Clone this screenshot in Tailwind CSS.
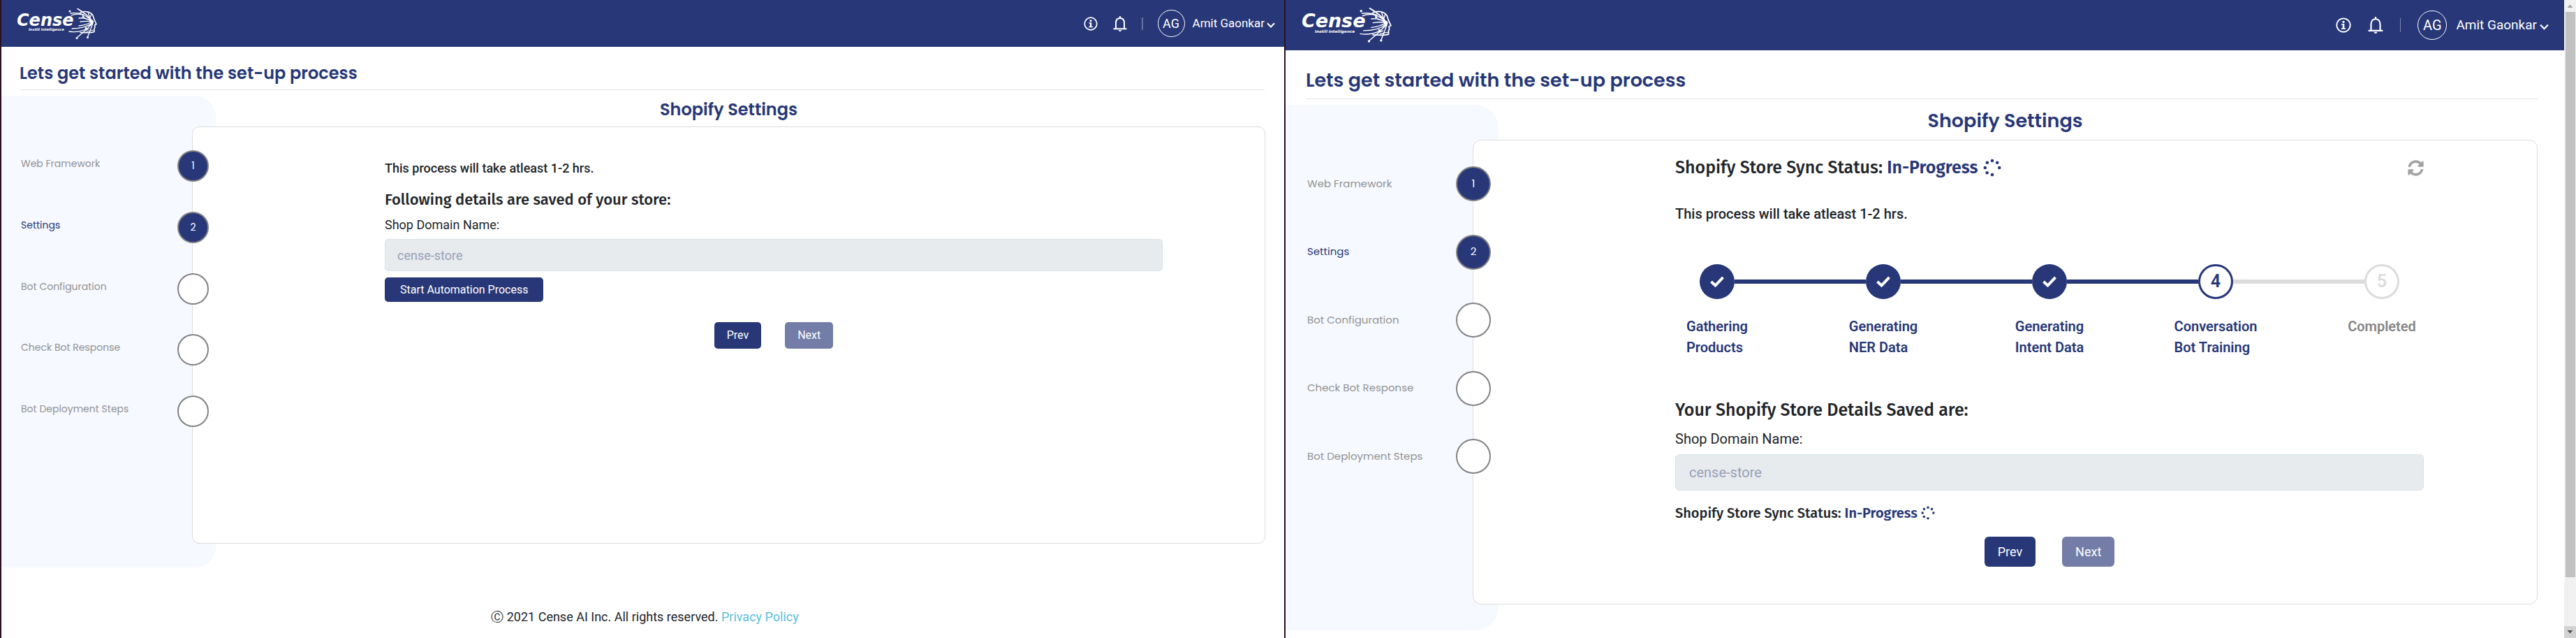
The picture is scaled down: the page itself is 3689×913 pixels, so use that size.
<!DOCTYPE html>
<html lang="en">
<head>
<meta charset="utf-8">
<meta name="viewport" content="width=device-width, initial-scale=1">
<title>Cense – Shopify Settings</title>
<script src="https://cdn.jsdelivr.net/npm/@tailwindcss/browser@4"></script>
</head>
<body class="bg-white font-['Roboto',sans-serif] text-[#212529]">

<svg class="hidden" aria-hidden="true">
  <symbol id="logo" viewBox="0 0 114 46">
    <text x="-1" y="26" font-family="DejaVu Sans, sans-serif" font-style="italic" font-weight="700" font-size="24" fill="#fff">Cense</text>
    <text x="16" y="33" font-family="DejaVu Sans, sans-serif" font-style="italic" font-weight="700" font-size="5" fill="#fff">Instill Intelligence</text>
    <g fill="none" stroke="#fff" stroke-linecap="round" stroke-linejoin="round">
      <path stroke-width="1.6" d="M90 7C97 4 105 6 108 11L110 17L113 23.500L110.500 25L111 28L110 30L110 34.500C104 37 97 35 90 35.500"/>
      <path stroke-width="1.6" d="M86 1.500C94 6 102 12 107 20"/>
      <path stroke-width="1.300" d="M77 11C88 7 99 10 107 20M76 8C84 7 90 8 95 10M88 15C95 14 101 16 107 20M90 20C97 19 102 19 107 20M88 26C96 25 102 23 107 20M78 30C90 30 101 27 108 21M74 34C86 36 101 33 108 21M85 43L99 31L107 22M100.500 42L104 33L108 22M101 6L103 13L107 20M106 9L104 14"/>
      <path stroke-width="1" d="M96 33L103 30M99 34L109 32M93 11L98 16"/>
    </g>
    <g fill="#fff"><circle cx="75" cy="5" r="1.500"/><circle cx="85" cy="43.500" r="1.500"/><circle cx="100.500" cy="42.500" r="1.500"/><circle cx="94" cy="13" r="1.300"/><circle cx="98" cy="29" r="1.200"/><circle cx="106.500" cy="20" r="2.500"/></g>
  </symbol>
  <symbol id="info" viewBox="0 0 20 20">
    <circle cx="10" cy="10" r="8.800" fill="none" stroke="#fff" stroke-width="1.700"/>
    <circle cx="10" cy="5.800" r="1.500" fill="#fff"/>
    <path fill="#fff" d="M7.500 8.200h3.700v5.500h1.500v1.500H7.300v-1.500h1.600V9.700H7.500z"/>
  </symbol>
  <symbol id="bell" viewBox="0 0 20 22">
    <path fill="none" stroke="#fff" stroke-width="2" stroke-linejoin="round" d="M4 18V10C4 5.500 6.500 3 10 3S16 5.500 16 10V18"/>
    <path fill="#fff" d="M9 0h2v3H9zM.500 17.200h19v2H.500zM7.800 20h4.400a2.200 2 0 0 1-4.400 0z"/>
  </symbol>
  <symbol id="chevron" viewBox="0 0 12 8">
    <path fill="none" stroke="#fff" stroke-width="2" d="M1 1.200L6 6.500L11 1.200"/>
  </symbol>
  <symbol id="spinner" viewBox="0 0 26 26">
    <g fill="#273777"><circle cx="13" cy="3" r="2.300"/><circle cx="20.200" cy="5.800" r="2.300"/><circle cx="23.200" cy="13" r="2.300"/><circle cx="13" cy="23" r="2.300"/><circle cx="5.600" cy="20.200" r="2.300"/><circle cx="2.800" cy="13" r="2.300"/><circle cx="5.800" cy="5.800" r="2.300"/></g>
  </symbol>
  <symbol id="refresh" viewBox="0 0 512 512">
    <path fill="#a3a3a3" d="M370.720 133.280C339.458 104.008 298.888 87.962 255.848 88c-77.458.068-144.328 53.178-162.791 126.850-1.344 5.363-6.122 9.150-11.651 9.150H24.103c-7.498 0-13.194-6.807-11.807-14.176C33.933 94.924 134.813 8 256 8c66.448 0 126.791 26.136 171.315 68.685L463.030 40.970C478.149 25.851 504 36.559 504 57.941V192c0 13.255-10.745 24-24 24H345.941c-21.382 0-32.090-25.851-16.971-40.971l41.750-41.749zM32 296h134.059c21.382 0 32.090 25.851 16.971 40.971l-41.750 41.750c31.262 29.273 71.835 45.319 114.876 45.280 77.418-.070 144.315-53.144 162.787-126.849 1.344-5.363 6.122-9.150 11.651-9.150h57.304c7.498 0 13.194 6.807 11.807 14.176C478.067 417.076 377.187 504 256 504c-66.448 0-126.791-26.136-171.315-68.685L48.970 471.030C33.851 486.149 8 475.441 8 454.059V320c0-13.255 10.745-24 24-24z"/>
  </symbol>
  <symbol id="check" viewBox="0 0 20 16">
    <path fill="none" stroke="#fff" stroke-width="4" d="M1.500 8L7.500 13.500L18.500 1.800"/>
  </symbol>
</svg>

<div class="grid min-h-screen grid-cols-[1839fr_1850fr]">

  <!-- Settings before the automation starts -->
  <section class="flex min-w-0 flex-col border-l-2 border-[#2a1024]">
    <header class="flex h-[67px] items-center justify-between bg-[#273777] pl-[23px] pr-[13px] text-white">
      <a href="#" aria-label="Cense home"><svg class="h-[46px] w-[114px]"><use href="#logo"/></svg></a>
      <div class="flex items-center">
        <button aria-label="Information"><svg class="block h-[20px] w-[20px]"><use href="#info"/></svg></button>
        <button aria-label="Notifications" class="ml-[22px]"><svg class="block h-[22px] w-[20px]"><use href="#bell"/></svg></button>
        <span class="ml-[21px] h-[18px] w-[2px] bg-white/30"></span>
        <span class="ml-[21px] flex h-[39px] w-[39px] items-center justify-center rounded-full border border-white text-[18px]">AG</span>
        <button class="ml-[11px] flex items-center gap-[3px] text-[17px]">Amit Gaonkar <svg class="mt-[4px] h-[8px] w-[12px]"><use href="#chevron"/></svg></button>
      </div>
    </header>

    <h1 class="ml-[26px] mr-[28px] border-b border-[#e3e3e6] pb-[3px] pt-[18px] font-['Poppins','Inter',sans-serif] text-[24px] font-semibold leading-[40px] text-[#273777]">Lets get started with the set-up process</h1>

    <div class="mt-2 flex">
      <aside class="min-h-[675px] w-[307px] shrink-0 rounded-r-[30px] bg-[#f6f9ff] pt-[78px]">
        <ol class="relative z-10 ml-[28px] mr-[10px] flex h-[396px] flex-col justify-between font-['Poppins','Inter',sans-serif] text-[14px] text-[#929292]">
          <li class="flex items-center justify-between"><span class="pb-[6px]">Web Framework</span><span class="flex h-[45px] w-[45px] items-center justify-center rounded-full border-2 border-[#828282] bg-[#273777] text-white">1</span></li>
          <li class="flex items-center justify-between"><span class="pb-[6px] text-[#273777]">Settings</span><span class="flex h-[45px] w-[45px] items-center justify-center rounded-full border-2 border-[#828282] bg-[#273777] text-white">2</span></li>
          <li class="flex items-center justify-between"><span class="pb-[6px]">Bot Configuration</span><span class="h-[45px] w-[45px] rounded-full border-2 border-[#828282] bg-white"></span></li>
          <li class="flex items-center justify-between"><span class="pb-[6px]">Check Bot Response</span><span class="h-[45px] w-[45px] rounded-full border-2 border-[#828282] bg-white"></span></li>
          <li class="flex items-center justify-between"><span class="pb-[6px]">Bot Deployment Steps</span><span class="h-[45px] w-[45px] rounded-full border-2 border-[#828282] bg-white"></span></li>
        </ol>
      </aside>

      <div class="-ml-[34px] mr-[27px] flex min-w-0 flex-1 flex-col pb-[34px]">
        <h2 class="mb-[4px] text-center font-['Poppins','Inter',sans-serif] text-[24px] font-semibold leading-[40px] text-[#273777]">Shopify Settings</h2>
        <main class="relative flex-1 rounded-[10px] border border-[#dcdcde] bg-white pl-[275px] pr-[146px] pt-[45px]">
          <p class="text-[18px] font-medium leading-[27px]">This process will take atleast 1-2 hrs.</p>
          <h3 class="mt-[18px] font-['Fira_Sans','Noto_Sans',sans-serif] text-[22px] font-medium leading-[28px]">Following details are saved of your store:</h3>
          <label for="domain-a" class="mt-[8px] block text-[18px] leading-[27px]">Shop Domain Name:</label>
          <input id="domain-a" type="text" disabled value="cense-store" class="mt-[7px] block h-[46px] w-full rounded-[5px] border border-[#dae1e8] bg-[#e7ebee] px-[17px] text-[18px] text-[#9a9fb8]">
          <button class="mt-[9px] block h-[35px] rounded-[5px] bg-[#273777] px-[22px] text-[16px] text-white">Start Automation Process</button>
          <div class="mt-[29px] flex justify-center gap-[34px] text-[16px] text-white">
            <button class="h-[38px] rounded-[5px] bg-[#273777] px-[18px]">Prev</button>
            <button disabled class="h-[38px] rounded-[5px] bg-[#737da7] px-[18px]">Next</button>
          </div>
        </main>
      </div>
    </div>

    <footer class="mt-auto pb-[16px] pl-[6px] text-center text-[18px] leading-[28px]">Ⓒ 2021 Cense AI Inc. All rights reserved. <a href="#" class="text-[#5bc0de]">Privacy Policy</a></footer>
  </section>

  <!-- Settings while the store is syncing -->
  <section class="flex min-w-0 border-l-2 border-[#2a1024]">
    <div class="flex min-w-0 flex-1 flex-col">
      <header class="flex h-[72px] items-center justify-between bg-[#273777] pl-[24px] pr-[22px] text-white">
        <a href="#" aria-label="Cense home"><svg class="h-[52px] w-[128px]"><use href="#logo"/></svg></a>
        <div class="flex items-center">
          <button aria-label="Information"><svg class="block h-[22px] w-[22px]"><use href="#info"/></svg></button>
          <button aria-label="Notifications" class="ml-[24px]"><svg class="block h-[24px] w-[22px]"><use href="#bell"/></svg></button>
          <span class="ml-[24px] h-[20px] w-px bg-white/40"></span>
          <span class="ml-[24px] flex h-[42px] w-[42px] items-center justify-center rounded-full border border-white text-[20px]">AG</span>
          <button class="ml-[13px] flex items-center gap-[4px] text-[19px]">Amit Gaonkar <svg class="mt-[4px] h-[9px] w-[13px]"><use href="#chevron"/></svg></button>
        </div>
      </header>

      <h1 class="ml-[29px] mr-[38px] border-b border-[#e3e3e6] pb-[4px] pt-[20px] font-['Poppins','Inter',sans-serif] text-[27px] font-semibold leading-[45px] text-[#273777]">Lets get started with the set-up process</h1>

      <div class="mt-2 flex">
        <aside class="min-h-[752px] w-[305px] shrink-0 rounded-r-[33px] bg-[#f6f9ff] pt-[88px]">
          <ol class="relative z-10 ml-[31px] mr-[11px] flex h-[440px] flex-col justify-between font-['Poppins','Inter',sans-serif] text-[15px] text-[#929292]">
            <li class="flex items-center justify-between"><span>Web Framework</span><span class="flex h-[50px] w-[50px] items-center justify-center rounded-full border-2 border-[#828282] bg-[#273777] text-white">1</span></li>
            <li class="flex items-center justify-between"><span class="text-[#273777]">Settings</span><span class="flex h-[50px] w-[50px] items-center justify-center rounded-full border-2 border-[#828282] bg-[#273777] text-white">2</span></li>
            <li class="flex items-center justify-between"><span>Bot Configuration</span><span class="h-[50px] w-[50px] rounded-full border-2 border-[#828282] bg-white"></span></li>
            <li class="flex items-center justify-between"><span>Check Bot Response</span><span class="h-[50px] w-[50px] rounded-full border-2 border-[#828282] bg-white"></span></li>
            <li class="flex items-center justify-between"><span>Bot Deployment Steps</span><span class="h-[50px] w-[50px] rounded-full border-2 border-[#828282] bg-white"></span></li>
          </ol>
        </aside>

        <div class="-ml-[37px] mr-[38px] flex min-w-0 flex-1 flex-col pb-[37px]">
          <h2 class="mb-[4px] text-center font-['Poppins','Inter',sans-serif] text-[27px] font-semibold leading-[46px] text-[#273777]">Shopify Settings</h2>
          <main class="relative flex-1 rounded-[12px] border border-[#dcdcde] bg-white pl-[289px] pr-[162px] pt-[21px]">
            <div class="flex items-center justify-between">
              <h3 class="flex items-center gap-[7px] font-['Fira_Sans','Noto_Sans',sans-serif] text-[25px] font-medium leading-[36px]"><span>Shopify Store Sync Status: <b class="font-semibold text-[#273777]">In-Progress</b></span><svg class="h-[26px] w-[26px]"><use href="#spinner"/></svg></h3>
              <button aria-label="Refresh status"><svg class="block h-[23px] w-[23px]"><use href="#refresh"/></svg></button>
            </div>
            <p class="mt-[33px] text-[20px] font-medium leading-[30px]">This process will take atleast 1-2 hrs.</p>

            <ol class="-mx-[59px] mt-[57px] grid grid-cols-5 text-[20px] font-semibold leading-[30px] text-[#273777]">
              <li class="flex flex-col items-center gap-[24px]">
                <div class="flex w-full items-center"><i class="h-[6px] flex-1"></i><span class="flex h-[50px] w-[50px] items-center justify-center rounded-full bg-[#273777]"><svg class="h-[16px] w-[20px]"><use href="#check"/></svg></span><i class="h-[6px] flex-1 bg-[#273777]"></i></div>
                <span>Gathering<br>Products</span>
              </li>
              <li class="flex flex-col items-center gap-[24px]">
                <div class="flex w-full items-center"><i class="h-[6px] flex-1 bg-[#273777]"></i><span class="flex h-[50px] w-[50px] items-center justify-center rounded-full bg-[#273777]"><svg class="h-[16px] w-[20px]"><use href="#check"/></svg></span><i class="h-[6px] flex-1 bg-[#273777]"></i></div>
                <span>Generating<br>NER Data</span>
              </li>
              <li class="flex flex-col items-center gap-[24px]">
                <div class="flex w-full items-center"><i class="h-[6px] flex-1 bg-[#273777]"></i><span class="flex h-[50px] w-[50px] items-center justify-center rounded-full bg-[#273777]"><svg class="h-[16px] w-[20px]"><use href="#check"/></svg></span><i class="h-[6px] flex-1 bg-[#273777]"></i></div>
                <span>Generating<br>Intent Data</span>
              </li>
              <li class="flex flex-col items-center gap-[24px]">
                <div class="flex w-full items-center"><i class="h-[6px] flex-1 bg-[#273777]"></i><span class="flex h-[50px] w-[50px] items-center justify-center rounded-full border-[3px] border-[#273777] text-[25px]">4</span><i class="h-[6px] flex-1 bg-[#dcdcdc]"></i></div>
                <span>Conversation<br>Bot Training</span>
              </li>
              <li class="flex flex-col items-center gap-[24px] text-[#858585]">
                <div class="flex w-full items-center"><i class="h-[6px] flex-1 bg-[#dcdcdc]"></i><span class="flex h-[50px] w-[50px] items-center justify-center rounded-full border-[3px] border-[#dcdcdc] text-[25px] text-[#dcdcdc]">5</span><i class="h-[6px] flex-1"></i></div>
                <span>Completed</span>
              </li>
            </ol>

            <h3 class="mt-[57px] font-['Fira_Sans','Noto_Sans',sans-serif] text-[25px] font-medium leading-[36px]">Your Shopify Store Details Saved are:</h3>
            <label for="domain-b" class="mt-[8px] block text-[20px] leading-[30px]">Shop Domain Name:</label>
            <input id="domain-b" type="text" disabled value="cense-store" class="mt-[7px] block h-[52px] w-full rounded-[6px] border border-[#dae1e8] bg-[#e7ebee] px-[19px] text-[20px] text-[#9a9fb8]">
            <p class="mt-[17px] flex items-center gap-[5px] font-['Fira_Sans','Noto_Sans',sans-serif] text-[20px] font-medium leading-[30px]"><span>Shopify Store Sync Status: <b class="font-semibold text-[#273777]">In-Progress</b></span><svg class="h-[20px] w-[20px]"><use href="#spinner"/></svg></p>
            <div class="mt-[19px] flex justify-center gap-[38px] text-[18px] text-white">
              <button class="h-[43px] rounded-[6px] bg-[#273777] px-[19px]">Prev</button>
              <button disabled class="h-[43px] rounded-[6px] bg-[#737da7] px-[19px]">Next</button>
            </div>
          </main>
        </div>
      </div>
    </div>

    <!-- Scrollbar -->
    <div class="flex w-[17px] shrink-0 flex-col items-center bg-[#f1f1f1]" aria-hidden="true">
      <svg class="h-[17px] w-[17px] shrink-0"><path fill="#a3a3a3" d="M4.500 11h8L8.500 6.500z"/></svg>
      <div class="w-[14px] basis-[809px] bg-[#c1c1c1]"></div>
      <svg class="mt-auto h-[17px] w-[17px] shrink-0 bg-[#d2d2d2]"><path fill="#505050" d="M4.500 6h8L8.500 10.500z"/></svg>
    </div>
  </section>
</div>
</body>
</html>
